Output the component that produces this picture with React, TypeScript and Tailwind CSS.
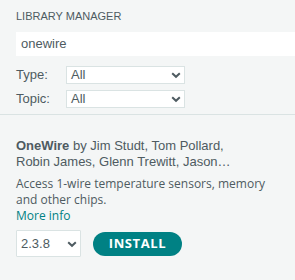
import React from 'react';

const Chevron = () => (
  <svg width="10" height="10" viewBox="0 0 10 10" className="shrink-0">
    <path d="M1.2 3.2 L5 6.8 L8.8 3.2" fill="none" stroke="#4e5b61" strokeWidth="2" />
  </svg>
);

const Select = ({ value, className }: { value: string; className: string }) => (
  <div className={`flex items-center justify-between bg-white border border-[#dae3e3] text-[#4e5b61] font-['Liberation_Sans',Arial,sans-serif] text-[13px] ${className}`}>
    <span>{value}</span>
    <Chevron />
  </div>
);

export default function App() {
  return (
    <div className="w-[295px] h-[280px] overflow-hidden bg-[#f4f6f6] text-[#4e5b61] font-['Liberation_Sans',Arial,sans-serif]">
      <div className="pl-4 pt-[10px] h-[32px] text-[11px] leading-[12px]">LIBRARY MANAGER</div>
      <div className="ml-4 h-[24px] bg-white flex items-center pl-[5px] text-[13px]">onewire</div>

      <div className="pl-4 pt-[10px] flex flex-col gap-[6px] text-[13px]">
        <div className="flex items-center h-[18px]">
          <span className="w-[50px]">Type:</span>
          <Select value="All" className="w-[119px] h-[18px] pl-[4px] pr-[3px]" />
        </div>
        <div className="flex items-center h-[18px]">
          <span className="w-[50px]">Topic:</span>
          <Select value="All" className="w-[119px] h-[18px] pl-[4px] pr-[3px]" />
        </div>
      </div>

      <div className="mt-[6px] h-px bg-[#dae3e3]" />

      <div className="pl-4 pr-2 pt-[23px]">
        <div className="text-[13px] leading-[16px]">
          <span className="font-bold">OneWire</span> by Jim Studt, Tom Pollard,
          <br />
          Robin James, Glenn Trewitt, Jason…
        </div>
        <div className="mt-[6px] font-['Open_Sans',sans-serif] text-[12px] leading-[16px]">
          <div>
            Access 1-wire temperature sensors, memory
            <br />
            and other chips.
          </div>
          <div className="text-[#008184]">More info</div>
        </div>
        <div className="mt-[6px] flex items-center gap-3">
          <Select value="2.3.8" className="w-[65px] h-[27px] pl-[4px] pr-[3px] rounded-[1px]" />
          <button className="h-[24px] w-[89px] rounded-full bg-[#008184] text-white font-bold text-[13px] tracking-[0.6px] font-['Open_Sans',sans-serif]">
            INSTALL
          </button>
        </div>
      </div>
    </div>
  );
}
